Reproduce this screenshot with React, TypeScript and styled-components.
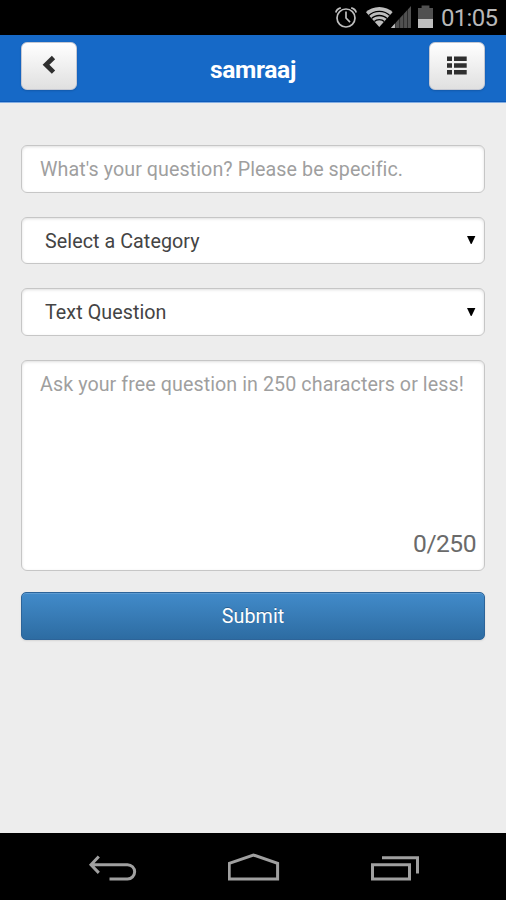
import React from "react";
import styled, { createGlobalStyle, css } from "styled-components";

const GlobalStyle = createGlobalStyle`
  * { box-sizing: border-box; }
  body { margin: 0; background: #000; }
  input, select, textarea, button { font-family: inherit; margin: 0; outline: none; }
`;

const Screen = styled.div`
  width: 506px;
  height: 900px;
  display: flex;
  flex-direction: column;
  overflow: hidden;
  background: #ededed;
  font-family: Roboto, sans-serif;
  color: #333;
`;

const StatusBar = styled.div`
  flex: none;
  height: 35px;
  display: flex;
  justify-content: flex-end;
  background: #000;
`;

const StatusIcons = styled.svg`
  width: 106px;
  height: 35px;
`;

const Clock = styled.div`
  width: 66px;
  padding: 1px 0 0 1px;
  font-size: 24px;
  line-height: 35px;
  font-weight: 400;
  letter-spacing: -0.7px;
  color: #b8b8b8;
  white-space: nowrap;
`;

const Header = styled.header`
  flex: none;
  height: 68px;
  padding: 7px 21px 0;
  display: flex;
  justify-content: space-between;
  background: #1669c7;
  border-bottom: 1px solid #83aee3;
  box-shadow: inset 0 -1px 0 #0d5ab9;
`;

const Title = styled.h1`
  margin: 0;
  padding-top: 3px;
  font-size: 24.6px;
  line-height: 50px;
  font-weight: 700;
  letter-spacing: -0.35px;
  color: #fff;
`;

const IconButton = styled.button`
  width: 56px;
  height: 48px;
  padding: 0;
  display: flex;
  border: 1px solid #c5c8d2;
  border-radius: 6px;
  background: linear-gradient(#fff, #e0e0e0);
  box-shadow: 0 1px 2px rgba(0, 0, 0, 0.15);
  svg { width: 54px; height: 46px; }
`;

const Form = styled.form`
  flex: 1;
  padding: 42px 21px 0;
  display: flex;
  flex-direction: column;
`;

const fieldText = css`
  font-size: 19.7px;
  font-weight: 400;
  letter-spacing: 0.07px;
  color: #444;
`;

const fieldBox = css`
  width: 464px;
  border: 1px solid #c6c6c6;
  border-radius: 6px;
  background: #fff;
  box-shadow: inset 0 1px 3px rgba(0, 0, 0, 0.13);
`;

const TextField = styled.input`
  ${fieldBox}
  ${fieldText}
  height: 48px;
  padding: 1px 17px 0 18px;
  margin-bottom: 24px;
  &::placeholder { color: #9f9f9f; opacity: 1; }
`;

const SelectWrap = styled.div<{ $height: number }>`
  ${fieldBox}
  height: ${(p) => p.$height}px;
  margin-bottom: 24px;
  display: flex;
  align-items: center;
  padding-right: 8px;
`;

const Select = styled.select`
  ${fieldText}
  flex: 1;
  height: 45px;
  border: 0;
  padding: 1px 0 0 23px;
  appearance: none;
  background: transparent;
`;

const Caret = styled.svg`
  width: 9px;
  height: 9px;
`;

const QuestionBox = styled.div`
  ${fieldBox}
  height: 211px;
  display: flex;
  flex-direction: column;
`;

const QuestionArea = styled.textarea`
  ${fieldText}
  flex: 1;
  border: 0;
  padding: 10px 10px 0 18px;
  background: transparent;
  resize: none;
  line-height: 28px;
  &::placeholder { color: #9f9f9f; opacity: 1; }
`;

const Counter = styled.div`
  padding: 0 8px 10px 0;
  text-align: right;
  font-size: 24.6px;
  font-weight: 400;
  letter-spacing: -0.5px;
  line-height: 32px;
  color: #6a6a6a;
`;

const Submit = styled.button`
  width: 464px;
  height: 48px;
  margin-top: 21px;
  padding: 0;
  border: 1px solid #2d6499;
  border-radius: 5px;
  background: linear-gradient(#428bca, #2d6ca2);
  box-shadow: inset 0 1px 0 rgba(255, 255, 255, 0.15), 0 1px 2px rgba(0, 0, 0, 0.1);
  font-size: 19.7px;
  color: #fff;
  letter-spacing: 0.1px;
  text-shadow: 0 -1px 0 rgba(0, 0, 0, 0.25);
`;

const NavBar = styled.nav`
  flex: none;
  height: 67px;
  padding: 20px 87px 0 88px;
  display: flex;
  justify-content: space-between;
  background: #000;
  svg { width: 52px; height: 32px; fill: none; stroke: #a0a0a0; stroke-width: 3; }
`;

function Dropdown({ label, height }: { label: string; height: number }) {
  return (
    <SelectWrap $height={height}>
      <Select aria-label={label}><option>{label}</option></Select>
      <Caret viewBox="0 0 9 9"><path d="M0 0h8.4L4.6 8h-.8z" fill="#000" /></Caret>
    </SelectWrap>
  );
}

export default function App() {
  return (
    <>
      <GlobalStyle />
      <Screen>
        <StatusBar>
          <StatusIcons viewBox="334 0 106 35" fill="none">
            <g stroke="#bebebe" strokeWidth="1.7">
              <circle cx="346" cy="18" r="9" />
              <path d="M346 11.5V18l4 4.2M335.8 12.5q1-3.7 5-4.6M356.2 12.5q-1-3.7-5-4.6" />
            </g>
            <clipPath id="wifi"><path d="M379.3 27L364.5 10.5V5h29.6v5.5z" /></clipPath>
            <g clipPath="url(#wifi)">
              <circle cx="379.3" cy="27" r="20" fill="#bebebe" />
              <g stroke="#000" strokeWidth="1.3">
                <circle cx="379.3" cy="27" r="15.6" />
                <circle cx="379.3" cy="27" r="11.5" />
                <circle cx="379.3" cy="27" r="7.4" />
              </g>
            </g>
            <path d="M391 28V27.7L411 6v22z" fill="#505050" />
            <path d="M391 28l4.2-4.8V28z" fill="#bebebe" />
            <path d="M395.4 5v24M399.6 5v24M403.6 5v24M407.5 5v24" stroke="#000" strokeOpacity=".65" strokeWidth=".7" />
            <path d="M418 8h3.6V5.5h7.8V8h3.6v11h-15z" fill="#505050" />
            <path d="M418 19h15v9h-15z" fill="#bebebe" />
          </StatusIcons>
          <Clock>01:05</Clock>
        </StatusBar>
        <Header>
          <IconButton aria-label="Back">
            <svg viewBox="22 43 54 46"><path d="M53.5 57.5L46 64.8L53.5 72.1" fill="none" stroke="#2f2f2f" strokeWidth="4.7" /></svg>
          </IconButton>
          <Title>samraaj</Title>
          <IconButton aria-label="Menu">
            <svg viewBox="430 43 54 46" fill="#2f2f2f">
              <path d="M447 56.5h5v4.6h-5zM454 56.5h12.7v4.6H454zM447 63.2h5v4.6h-5zM454 63.2h12.7v4.6H454zM447 69.9h5v4.6h-5zM454 69.9h12.7v4.6H454z" />
            </svg>
          </IconButton>
        </Header>
        <Form onSubmit={(e) => e.preventDefault()}>
          <TextField placeholder="What's your question? Please be specific." />
          <Dropdown label="Select a Category" height={47} />
          <Dropdown label="Text Question" height={48} />
          <QuestionBox>
            <QuestionArea placeholder="Ask your free question in 250 characters or less!" />
            <Counter>0/250</Counter>
          </QuestionBox>
          <Submit type="submit">Submit</Submit>
        </Form>
        <NavBar>
          <svg viewBox="88.5 853 52 32"><path d="M91.5 864.7h36.5a7 7 0 0 1 0 14.3h-18M99.3 856.5l-7.8 8.2 7.8 8.2" /></svg>
          <svg viewBox="227.5 853 52 32"><path d="M228.7 879v-15.6l24.2-8.4 24.2 8.4V879z" /></svg>
          <svg viewBox="367 853 52 32"><path d="M372.5 864.7h37V879h-37zM382 857.7h35.5v15.8" /></svg>
        </NavBar>
      </Screen>
    </>
  );
}
